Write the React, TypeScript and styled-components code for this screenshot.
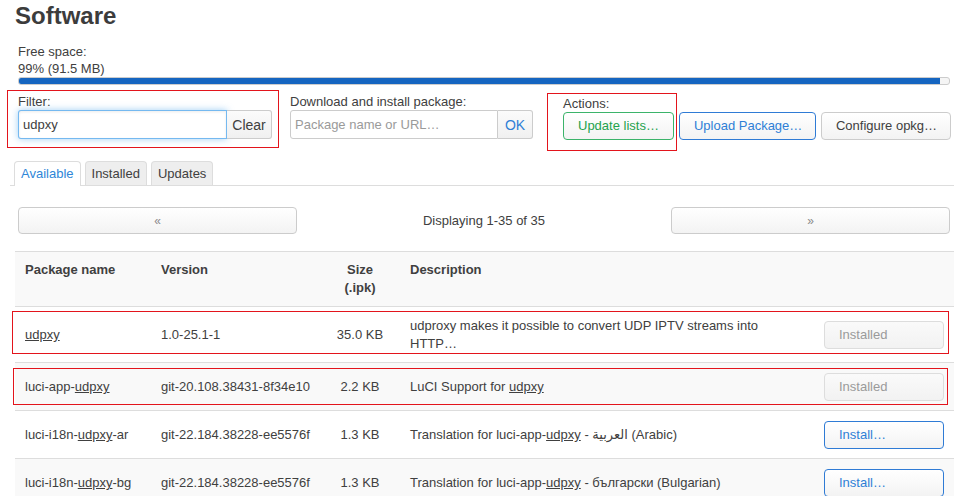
import * as React from "react";
import styled, { createGlobalStyle, css } from "styled-components";

const GlobalStyle = createGlobalStyle`
  html, body {
    margin: 0;
    background: #fff;
    overflow: hidden;
  }
  body {
    font-family: "Liberation Sans", Arial, "DejaVu Sans", sans-serif;
    font-size: 13px;
    line-height: 18px;
    color: #404040;
  }
  * {
    box-sizing: border-box;
  }
`;

const Page = styled.div`
  width: 954px;
  padding-left: 10px;
`;

const Title = styled.h2`
  margin: 2px 0 0 5px;
  font-size: 24px;
  line-height: 27px;
  font-weight: bold;
  color: #3c3c3c;
`;

const Section = styled.div`
  padding: 0 4px 0 8px;
`;

const FreeSpace = styled.div`
  margin-top: 14px;
  line-height: 17px;
`;

const Track = styled.div`
  height: 8px;
  border: 1px solid #ccc;
  border-radius: 3px;
  background: #f5f5f5;
  overflow: hidden;
`;

const Fill = styled.div<{ $pct: number }>`
  height: 100%;
  width: ${(p) => p.$pct}%;
  background: #1565c0;
`;

const Controls = styled.div`
  display: flex;
  align-items: flex-start;
  margin-top: 8px;
`;

const Field = styled.div<{ $gap?: number; $pad?: number }>`
  position: relative;
  margin-right: ${(p) => p.$gap ?? 0}px;
  padding-top: ${(p) => p.$pad ?? 0}px;
`;

const FieldLabel = styled.label`
  display: block;
  line-height: 17px;
`;

const InputGroup = styled.div`
  display: flex;
  height: 29px;
`;

const TextInput = styled.input<{ $w: number; $focus?: boolean }>`
  width: ${(p) => p.$w}px;
  height: 29px;
  margin: 0;
  padding: 0 4px;
  border: 1px solid #ccc;
  border-radius: 3px 0 0 3px;
  font: inherit;
  color: #404040;
  outline: none;
  background: #fff;
  &::placeholder {
    color: #9a9a9a;
  }
  ${(p) =>
    p.$focus &&
    css`
      border-color: rgba(82, 168, 236, 0.8);
      box-shadow: inset 0 1px 3px rgba(0, 0, 0, 0.08), 0 0 7px rgba(82, 168, 236, 0.55);
    `}
`;

const AddonButton = styled.button<{ $w: number; $blue?: boolean }>`
  width: ${(p) => p.$w}px;
  height: 29px;
  margin: 0;
  padding: 0;
  border: 1px solid #ccc;
  border-left: 0;
  border-radius: 0 3px 3px 0;
  background: linear-gradient(#fbfbfb, #f0f0f0);
  font: inherit;
  font-size: 14px;
  color: ${(p) => (p.$blue ? "#2f80d6" : "#404040")};
`;

const ButtonRow = styled.div`
  display: flex;
  gap: 5px;
`;

const variants = {
  positive: css`
    color: #1fa24e;
    border-color: #3bb36a;
  `,
  action: css`
    color: #2f7fd6;
    border-color: #2f7bd5;
  `,
  neutral: css`
    color: #404040;
    border-color: #ccc;
  `,
  disabled: css`
    color: #9a9a9a;
    border-color: #ddd;
    background: linear-gradient(#fafafa, #f2f2f2);
  `,
};

type Variant = keyof typeof variants;

const Button = styled.button<{ $variant: Variant; $w?: number; $left?: boolean }>`
  height: 28px;
  margin: 0;
  padding: 0 ${(p) => (p.$left ? "0 0 14px" : "14px")};
  ${(p) => p.$w && `width: ${p.$w}px;`}
  text-align: ${(p) => (p.$left ? "left" : "center")};
  border: 1px solid #ccc;
  border-radius: 4px;
  background: linear-gradient(#ffffff, #f3f3f3);
  font: inherit;
  white-space: nowrap;
  ${(p) => variants[p.$variant]}
`;

const Highlight = styled.span<{ $top: number; $left: number; $w: number; $h: number }>`
  position: absolute;
  top: ${(p) => p.$top}px;
  left: ${(p) => p.$left}px;
  width: ${(p) => p.$w}px;
  height: ${(p) => p.$h}px;
  border: 1px solid #e3141c;
  pointer-events: none;
`;

const Tabs = styled.ul`
  display: flex;
  margin: 21px 0 0;
  padding: 0 0 0 4px;
  list-style: none;
  border-bottom: 1px solid #ddd;
`;

const Tab = styled.li<{ $active?: boolean }>`
  margin-right: 4px;
  padding: 3px 6px 2px;
  line-height: 18px;
  border: 1px solid #ddd;
  border-bottom: 0;
  border-radius: 4px 4px 0 0;
  background: ${(p) => (p.$active ? "#fff" : "#eee")};
  color: ${(p) => (p.$active ? "#2f86d8" : "#404040")};
  ${(p) =>
    p.$active &&
    css`
      margin-bottom: -1px;
      padding-bottom: 3px;
    `}
`;

const Pager = styled(Section)`
  display: grid;
  grid-template-columns: 279px 1fr 279px;
  align-items: center;
  margin-top: 21px;
`;

const PageButton = styled.button`
  height: 27px;
  margin: 0;
  border: 1px solid #ccc;
  border-radius: 4px;
  background: linear-gradient(#ffffff, #f3f3f3);
  font: inherit;
  font-size: 12px;
  color: #8a8a8a;
`;

const PageInfo = styled.div`
  text-align: center;
`;

const TableWrap = styled.div`
  position: relative;
  width: 939px;
  margin: 17px 0 0 5px;
`;

const Table = styled.table`
  width: 100%;
  border-collapse: collapse;
  table-layout: fixed;
  border-top: 1px solid #ddd;
`;

const Th = styled.th<{ $center?: boolean }>`
  padding: 9px 10px;
  text-align: ${(p) => (p.$center ? "center" : "left")};
  vertical-align: top;
  font-weight: bold;
  background: #f9f9f9;
  border-bottom: 1px solid #ddd;
`;

const Tr = styled.tr<{ $striped?: boolean }>`
  background: ${(p) => (p.$striped ? "#f9f9f9" : "#fff")};
`;

const Td = styled.td<{ $center?: boolean }>`
  padding: 10px 10px 9px;
  text-align: ${(p) => (p.$center ? "center" : "left")};
  vertical-align: middle;
  border-bottom: 1px solid #ddd;
`;

const Match = styled.u`
  text-decoration: underline;
`;

const mark = (text: string) =>
  text.split(/(udpxy)/).map((part, i) =>
    part === "udpxy" ? <Match key={i}>{part}</Match> : <React.Fragment key={i}>{part}</React.Fragment>
  );

interface Pkg {
  name: string;
  version: string;
  size: string;
  description: string;
  installed: boolean;
}

const packages: Pkg[] = [
  {
    name: "udpxy",
    version: "1.0-25.1-1",
    size: "35.0 KB",
    description: "udproxy makes it possible to convert UDP IPTV streams into HTTP…",
    installed: true,
  },
  {
    name: "luci-app-udpxy",
    version: "git-20.108.38431-8f34e10",
    size: "2.2 KB",
    description: "LuCI Support for udpxy",
    installed: true,
  },
  {
    name: "luci-i18n-udpxy-ar",
    version: "git-22.184.38228-ee5576f",
    size: "1.3 KB",
    description: "Translation for luci-app-udpxy - العربية (Arabic)",
    installed: false,
  },
  {
    name: "luci-i18n-udpxy-bg",
    version: "git-22.184.38228-ee5576f",
    size: "1.3 KB",
    description: "Translation for luci-app-udpxy - български (Bulgarian)",
    installed: false,
  },
];

export default function App() {
  return (
    <Page>
      <GlobalStyle />
      <Title>Software</Title>

      <Section>
        <FreeSpace>
          Free space:
          <br />
          99% (91.5 MB)
        </FreeSpace>
        <Track>
          <Fill $pct={99} />
        </Track>

        <Controls>
          <Field $gap={18}>
            <FieldLabel>Filter:</FieldLabel>
            <InputGroup>
              <TextInput $w={209} $focus defaultValue="udpxy" />
              <AddonButton $w={45}>Clear</AddonButton>
            </InputGroup>
            <Highlight $top={-3} $left={-11} $w={272} $h={58} />
          </Field>

          <Field $gap={30}>
            <FieldLabel>Download and install package:</FieldLabel>
            <InputGroup>
              <TextInput $w={208} placeholder="Package name or URL…" />
              <AddonButton $w={35} $blue>
                OK
              </AddonButton>
            </InputGroup>
          </Field>

          <Field $pad={2}>
            <FieldLabel>Actions:</FieldLabel>
            <ButtonRow>
              <Button $variant="positive">Update lists…</Button>
              <Button $variant="action" $w={137}>
                Upload Package…
              </Button>
              <Button $variant="neutral" $w={130}>
                Configure opkg…
              </Button>
            </ButtonRow>
            <Highlight $top={0} $left={-16} $w={130} $h={58} />
          </Field>
        </Controls>
      </Section>

      <Tabs>
        <Tab $active>Available</Tab>
        <Tab>Installed</Tab>
        <Tab>Updates</Tab>
      </Tabs>

      <Pager>
        <PageButton>«</PageButton>
        <PageInfo>Displaying 1-35 of 35</PageInfo>
        <PageButton>»</PageButton>
      </Pager>

      <TableWrap>
        <Table>
          <colgroup>
            <col style={{ width: 136 }} />
            <col style={{ width: 169 }} />
            <col style={{ width: 80 }} />
            <col style={{ width: 414 }} />
            <col style={{ width: 140 }} />
          </colgroup>
          <thead>
            <tr>
              <Th>Package name</Th>
              <Th>Version</Th>
              <Th $center>
                Size
                <br />
                (.ipk)
              </Th>
              <Th>Description</Th>
              <Th />
            </tr>
          </thead>
          <tbody>
            {packages.map((pkg, i) => (
              <Tr key={pkg.name} $striped={i % 2 === 1}>
                <Td>{mark(pkg.name)}</Td>
                <Td>{pkg.version}</Td>
                <Td $center>{pkg.size}</Td>
                <Td>{mark(pkg.description)}</Td>
                <Td>
                  {pkg.installed ? (
                    <Button $variant="disabled" $w={120} $left disabled>
                      Installed
                    </Button>
                  ) : (
                    <Button $variant="action" $w={120} $left>
                      Install…
                    </Button>
                  )}
                </Td>
              </Tr>
            ))}
          </tbody>
        </Table>
        <Highlight $top={60} $left={-3} $w={937} $h={43} />
        <Highlight $top={117} $left={-2} $w={935} $h={37} />
      </TableWrap>
    </Page>
  );
}
